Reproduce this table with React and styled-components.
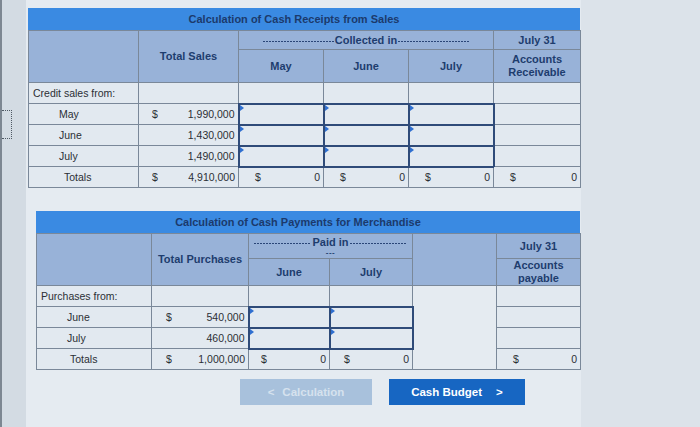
import React from 'react';
import styled, { createGlobalStyle } from 'styled-components';

const GlobalStyle = createGlobalStyle`
  html, body {
    margin: 0;
    padding: 0;
    background: #dce3ea;
    font-family: "Liberation Sans", Arial, sans-serif;
  }
`;

const Screen = styled.div`
  display: flex;
  width: 700px;
  height: 427px;
  overflow: hidden;
`;

const Bezel = styled.div`
  width: 26px;
  flex-shrink: 0;
  background: #d3dbe3;
  border-left: 2px solid #7d8792;
  padding-top: 110px;
  box-sizing: border-box;
`;

const Marker = styled.div`
  width: 9px;
  height: 27px;
  border: 1px dotted #4f5964;
  border-left: none;
`;

const Panel = styled.div`
  width: 555px;
  flex-shrink: 0;
  background: #e5ebf1;
  padding: 8px 1px 0 2px;
  box-sizing: border-box;
  display: flex;
  flex-direction: column;
`;

const Section = styled.div`
  margin-left: ${p => p.$indent || 0}px;
  margin-top: ${p => p.$top || 0}px;
`;

const TitleBar = styled.div`
  height: 22px;
  line-height: 22px;
  background: #3a8ae2;
  color: #1c3a6c;
  font-weight: bold;
  font-size: 11px;
  text-align: center;
  padding-right: 20px;
`;

const Table = styled.table`
  width: 100%;
  table-layout: fixed;
  border-collapse: collapse;
  font-size: 10.5px;
  color: #2b2f35;
`;

const Col = styled.col`
  width: ${p => p.$w}px;
`;

const HeadRow = styled.tr`
  height: ${p => p.$h}px;
`;

const Head = styled.th`
  background: #98b2d8;
  border: 1px solid #7a8899;
  color: #1e3d6e;
  font-size: 11px;
  font-weight: bold;
  text-align: center;
  line-height: 13px;
  padding: 0 2px;
`;

const Dashed = styled.div`
  display: flex;
  align-items: center;
  gap: 1px;
  white-space: nowrap;
  padding: 0 ${p => p.$inset || 0}px;
`;

const DashLine = styled.span`
  flex: 1;
  height: 1px;
  margin-top: 2px;
  background: repeating-linear-gradient(to right, #2a4677 0 2px, transparent 2px 3px);
`;

const Tail = styled.div`
  font-size: 8px;
  line-height: 7px;
  letter-spacing: 0.5px;
`;

const Row = styled.tr`
  height: 21px;
`;

const Cell = styled.td`
  position: relative;
  background: #e2e9f0;
  border: 1px solid #7a8899;
  padding: 0 3px 0 ${p => p.$indent || 4}px;
  white-space: nowrap;
  ${p =>
    p.$input &&
    `
    border: 2px solid #2f4b79;
    &::before {
      content: '';
      position: absolute;
      left: 0;
      top: 0;
      border-top: 3px solid transparent;
      border-bottom: 3px solid transparent;
      border-left: 4px solid #2f6fd0;
    }
  `}
`;

const Blank = styled.td`
  background: #e5ebf1;
  border: 1px solid #7a8899;
`;

const Amount = styled.div`
  display: flex;
  justify-content: ${p => (p.$dollar ? 'space-between' : 'flex-end')};
  padding-left: ${p => p.$pad || 0}px;
`;

const ButtonRow = styled.div`
  display: flex;
  gap: 17px;
  margin: 9px 0 0 212px;
`;

const Button = styled.div`
  height: 26px;
  width: ${p => p.$w}px;
  display: flex;
  align-items: center;
  justify-content: center;
  gap: ${p => p.$gap}px;
  font-size: 11.5px;
  font-weight: bold;
  background: ${p => (p.$primary ? '#1766c2' : '#a8c1dc')};
  color: ${p => (p.$primary ? '#ffffff' : '#d6e2ee')};
`;

function Money({ dollar, value, pad }) {
  return (
    <Amount $dollar={dollar} $pad={pad}>
      {dollar && <span>$</span>}
      <span>{value}</span>
    </Amount>
  );
}

function Receipts() {
  const months = ['May', 'June', 'July'];
  const sales = ['1,990,000', '1,430,000', '1,490,000'];
  return (
    <Section>
      <TitleBar>Calculation of Cash Receipts from Sales</TitleBar>
      <Table>
        <colgroup>
          {[110, 100, 85, 85, 85, 87].map((w, i) => <Col key={i} $w={w} />)}
        </colgroup>
        <thead>
          <HeadRow $h={19}>
            <Head rowSpan={2} />
            <Head rowSpan={2}>Total Sales</Head>
            <Head colSpan={3}>
              <Dashed $inset={22}>
                <DashLine />
                <span>Collected in</span>
                <DashLine />
              </Dashed>
            </Head>
            <Head>July 31</Head>
          </HeadRow>
          <HeadRow $h={33}>
            <Head>May</Head>
            <Head>June</Head>
            <Head>July</Head>
            <Head>Accounts<br />Receivable</Head>
          </HeadRow>
        </thead>
        <tbody>
          <Row>
            <Cell>Credit sales from:</Cell>
            <Cell /><Cell /><Cell /><Cell /><Cell />
          </Row>
          {months.map((m, i) => (
            <Row key={m}>
              <Cell $indent={30}>{m}</Cell>
              <Cell><Money dollar={i === 0} value={sales[i]} pad={9} /></Cell>
              <Cell $input /><Cell $input /><Cell $input />
              <Cell />
            </Row>
          ))}
          <Row>
            <Cell $indent={35}>Totals</Cell>
            <Cell><Money dollar value="4,910,000" pad={9} /></Cell>
            <Cell><Money dollar value="0" pad={12} /></Cell>
            <Cell><Money dollar value="0" pad={12} /></Cell>
            <Cell><Money dollar value="0" pad={12} /></Cell>
            <Cell><Money dollar value="0" pad={12} /></Cell>
          </Row>
        </tbody>
      </Table>
    </Section>
  );
}

function Payments() {
  return (
    <Section $indent={8} $top={23}>
      <TitleBar>Calculation of Cash Payments for Merchandise</TitleBar>
      <Table>
        <colgroup>
          {[115, 97, 81, 83, 84, 84].map((w, i) => <Col key={i} $w={w} />)}
        </colgroup>
        <thead>
          <HeadRow $h={25}>
            <Head rowSpan={2} />
            <Head rowSpan={2}>Total Purchases</Head>
            <Head colSpan={2}>
              <Dashed $inset={3}>
                <DashLine />
                <span>Paid in</span>
                <DashLine />
              </Dashed>
              <Tail>---</Tail>
            </Head>
            <Head rowSpan={2} />
            <Head>July 31</Head>
          </HeadRow>
          <HeadRow $h={25}>
            <Head>June</Head>
            <Head>July</Head>
            <Head>Accounts<br />payable</Head>
          </HeadRow>
        </thead>
        <tbody>
          <Row>
            <Cell>Purchases from:</Cell>
            <Cell /><Cell /><Cell />
            <Blank rowSpan={4} />
            <Cell />
          </Row>
          <Row>
            <Cell $indent={30}>June</Cell>
            <Cell><Money dollar value="540,000" pad={10} /></Cell>
            <Cell $input /><Cell $input />
            <Cell />
          </Row>
          <Row>
            <Cell $indent={30}>July</Cell>
            <Cell><Money value="460,000" /></Cell>
            <Cell $input /><Cell $input />
            <Cell />
          </Row>
          <Row>
            <Cell $indent={33}>Totals</Cell>
            <Cell><Money dollar value="1,000,000" pad={10} /></Cell>
            <Cell><Money dollar value="0" pad={8} /></Cell>
            <Cell><Money dollar value="0" pad={10} /></Cell>
            <Cell><Money dollar value="0" pad={12} /></Cell>
          </Row>
        </tbody>
      </Table>
    </Section>
  );
}

export default function App() {
  return (
    <>
      <GlobalStyle />
      <Screen>
        <Bezel>
          <Marker />
        </Bezel>
        <Panel>
          <Receipts />
          <Payments />
          <ButtonRow>
            <Button $w={132} $gap={8}>
              <span>&lt;</span>
              <span>Calculation</span>
            </Button>
            <Button $primary $w={136} $gap={14}>
              <span>Cash Budget</span>
              <span>&gt;</span>
            </Button>
          </ButtonRow>
        </Panel>
      </Screen>
    </>
  );
}
